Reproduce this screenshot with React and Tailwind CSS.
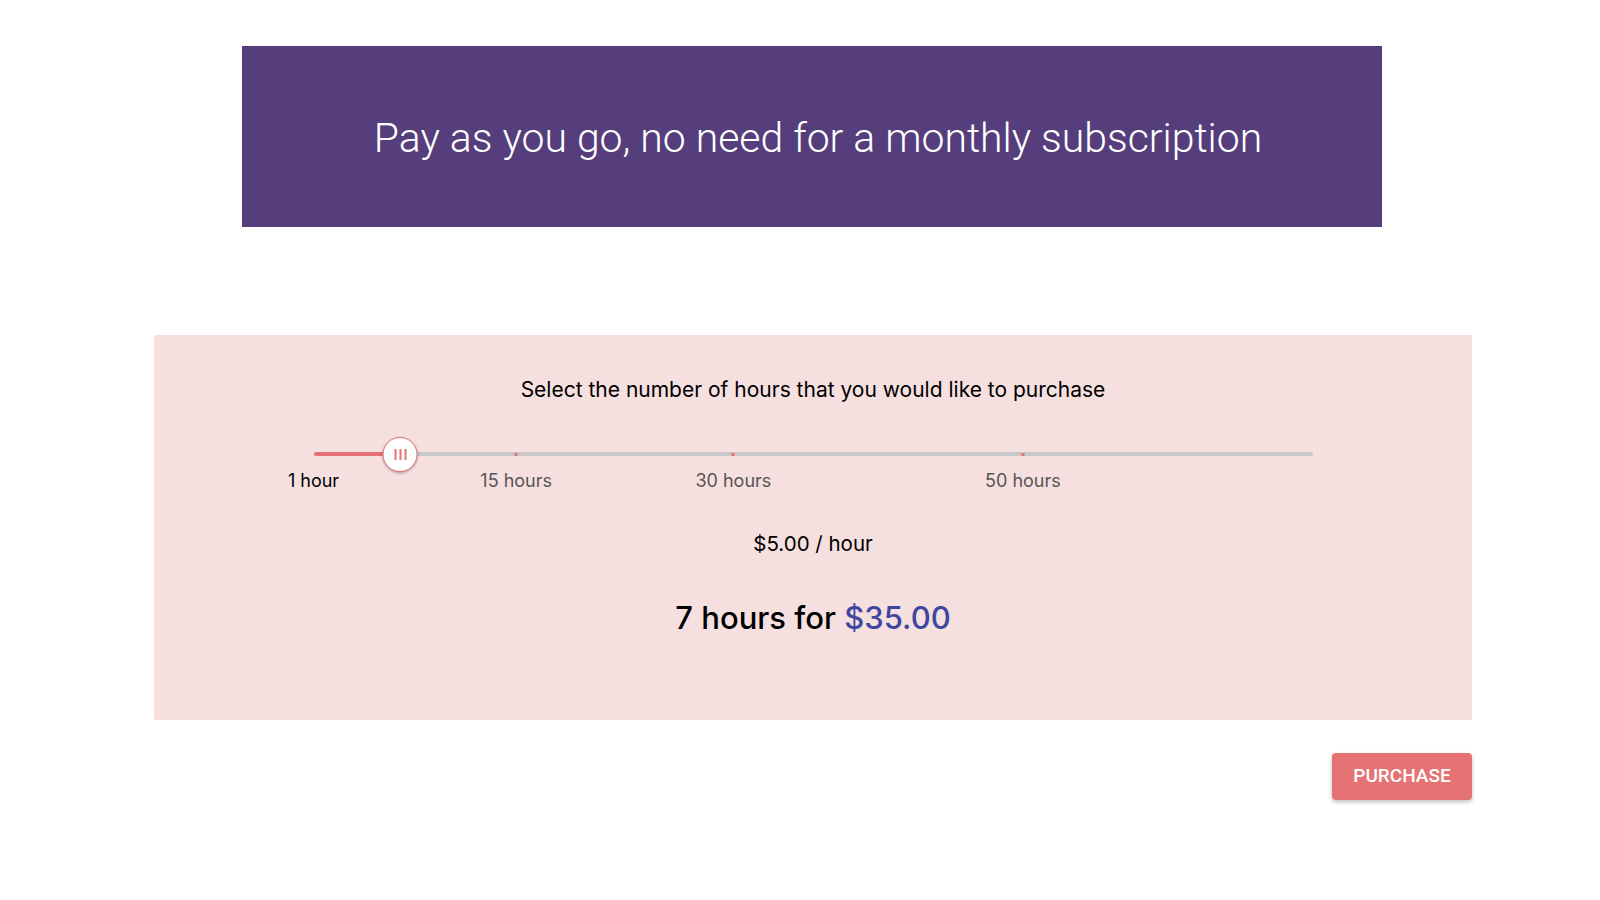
import React, { useState } from 'react';

const MIN = 1;
const MAX = 70;
const RATE = 5;
const marks = [1, 15, 30, 50];

function pct(v) {
  return ((v - MIN) / (MAX - MIN)) * 100;
}

function HoursSlider({ value, onChange }) {
  return (
    <div className="relative mx-auto w-[999px] h-[60px]">
      {/* rail */}
      <div className="absolute left-0 right-0 top-[14px] h-[4px] bg-[#c8c8c8] rounded-full" />
      {/* track */}
      <div
        className="absolute left-0 top-[14px] h-[4px] bg-[#e57373] rounded-full"
        style={{ width: `${pct(value)}%` }}
      />
      {marks.slice(1).map((m) => (
        <div
          key={m}
          className="absolute top-[14.5px] w-[3px] h-[3px] -translate-x-1/2 bg-[#e57373]"
          style={{ left: `${pct(m)}%` }}
        />
      ))}
      {marks.map((m) => (
        <span
          key={m}
          className={`absolute top-[31px] -translate-x-1/2 text-[18px] leading-[24px] whitespace-nowrap ${
            m <= value ? 'text-black' : 'text-[#555]'
          }`}
          style={{ left: `${pct(m)}%` }}
        >
          {m === 1 ? '1 hour' : `${m} hours`}
        </span>
      ))}
      <div
        className="absolute top-[-1.5px] -translate-x-1/2 w-[35px] h-[35px] rounded-full bg-white border border-[#e57373] shadow-[0_1px_3px_rgba(0,0,0,0.3)] flex items-center justify-center gap-[3px]"
        style={{ left: `${pct(value)}%` }}
      >
        <span className="w-[2px] h-[11px] bg-[#e57373]" />
        <span className="w-[2px] h-[11px] bg-[#e57373]" />
        <span className="w-[2px] h-[11px] bg-[#e57373]" />
      </div>
      <input
        type="range"
        min={MIN}
        max={MAX}
        value={value}
        onChange={(e) => onChange(Number(e.target.value))}
        className="absolute left-0 right-0 top-0 h-[34px] w-full opacity-0 cursor-pointer"
      />
    </div>
  );
}

export default function App() {
  const [hours, setHours] = useState(7);

  return (
    <div className="min-h-[900px] bg-white pt-[46px] font-['Inter',sans-serif]">
      <div className="ml-[242px] w-[1140px] h-[181px] bg-[#553e7b] flex items-center justify-center">
        <h1 className="text-white text-[40.9px] leading-[48px] mt-[3px] ml-[12px] font-light font-['Roboto',sans-serif]">
          Pay as you go, no need for a monthly subscription
        </h1>
      </div>

      <div className="ml-[154px] mt-[108px] w-[1318px] h-[385px] bg-[#f5dfdf] rounded-[2px] flex flex-col items-center">
        <p className="mt-[41px] text-[21px] leading-[28px] text-black">
          Select the number of hours that you would like to purchase
        </p>
        <div className="mt-[34px] w-full">
          <HoursSlider value={hours} onChange={setHours} />
        </div>
        <p className="mt-[32px] text-[20.5px] leading-[28px] text-black">
          ${RATE.toFixed(2)} / hour
        </p>
        <p className="mt-[40px] text-[31px] leading-[40px] font-medium text-black">
          {hours} hours for{' '}
          <span className="text-[#3f46a0]">${(hours * RATE).toFixed(2)}</span>
        </p>
      </div>

      <div className="ml-[154px] w-[1318px] mt-[33px] flex justify-end">
        <button className="w-[140px] h-[47px] rounded-[4px] bg-[#e57373] text-white text-[19px] font-['Roboto',sans-serif] font-medium shadow-[0_2px_4px_rgba(0,0,0,0.25)]">
          PURCHASE
        </button>
      </div>
    </div>
  );
}
